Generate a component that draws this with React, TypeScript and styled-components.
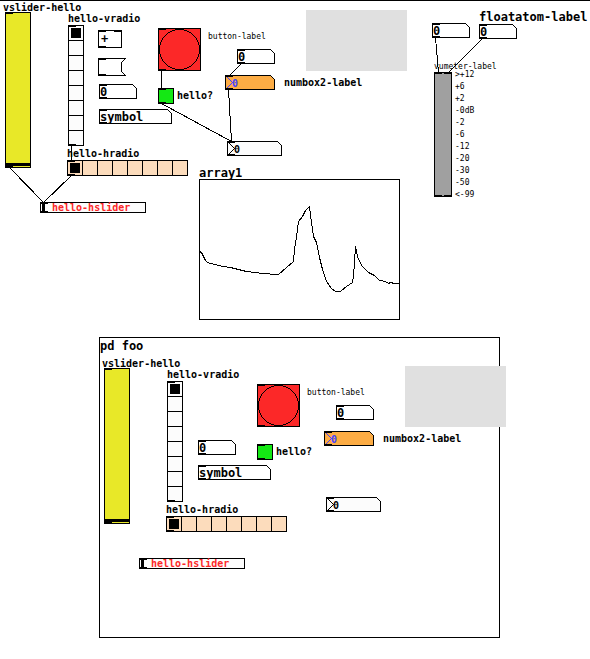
import { useId, type ReactNode } from 'react';
import styled, { createGlobalStyle, css } from 'styled-components';

const GlobalStyle = createGlobalStyle`
  *, *::before, *::after { box-sizing: border-box; }
  body {
    margin: 0;
    background: #fff;
    color: #000;
    font-family: "DejaVu Sans Mono", "Liberation Mono", monospace;
  }
`;

type Size = 'small' | 'medium' | 'large';

const textSize = {
  small: css`font-size: 8px; line-height: 8px; font-weight: 400;`,
  medium: css`font-size: 10px; line-height: 8px; font-weight: 700;`,
  large: css`font-size: 12px; line-height: 12px; font-weight: 700;`,
};

const Canvas = styled.main`
  position: relative;
  min-height: 100vh;
  overflow: auto;
  box-shadow: inset 0 1px #000;
`;

const Wires = styled.svg`
  position: absolute;
  inset: 0;
  width: 100%;
  height: 100%;
  fill: none;
  stroke: #000;
  shape-rendering: crispEdges;
  pointer-events: none;
`;

/* A patch object at its place on the free canvas; its label sits above or beside it. */
const Node = styled.div<{ $x: number; $y: number; $row?: boolean; $align?: string; $gap?: number }>`
  position: absolute;
  left: ${(p) => p.$x}px;
  top: ${(p) => p.$y}px;
  display: flex;
  flex-direction: ${(p) => (p.$row ? 'row' : 'column')};
  align-items: ${(p) => p.$align ?? 'flex-start'};
  gap: ${(p) => p.$gap ?? 0}px;
`;

const captionStyle = css<{ $size?: Size }>`
  margin: 0;
  white-space: pre;
  ${(p) => textSize[p.$size ?? 'medium']}
`;

const Label = styled.label<{ $size?: Size }>`${captionStyle}`;
const Caption = styled.span<{ $size?: Size }>`${captionStyle}`;
const Title = styled.h2<{ $size?: Size }>`${captionStyle}`;

const BangLabel = styled(Label)`
  padding-top: 5px;
`;

const SliderLabel = styled(Label)`
  position: absolute;
  inset: 0 0 0 12px;
  display: flex;
  align-items: center;
  color: #fc2828;
`;

const Body = styled.div`
  position: relative;
  display: flex;
`;

const Port = styled.span<{ $out?: boolean; $right?: boolean }>`
  position: absolute;
  ${(p) => (p.$out ? 'bottom: 0;' : 'top: 0;')}
  ${(p) => (p.$right ? 'right: 0;' : 'left: 0;')}
  width: 8px;
  height: 2px;
  background: #000;
  pointer-events: none;
`;

function Ported({ children, twin, twinOut }: { children: ReactNode; twin?: boolean; twinOut?: boolean }) {
  return (
    <Body>
      {children}
      <Port />
      <Port $out />
      {twin && <Port $right />}
      {twinOut && <Port $out $right />}
    </Body>
  );
}

const VSliderInput = styled.input`
  appearance: none;
  writing-mode: vertical-lr;
  direction: rtl;
  width: 26px;
  height: 156px;
  margin: 0;
  padding: 1px 0;
  border: 1px solid #000;
  background: #e8e828;
  &::-webkit-slider-thumb {
    appearance: none;
    width: 24px;
    height: 3px;
    background: #000;
  }
`;

const HSliderInput = styled.input`
  appearance: none;
  width: 106px;
  height: 11px;
  margin: 0;
  padding: 0 1px;
  border: 1px solid #000;
  background: #fcfcfc;
  &::-webkit-slider-thumb {
    appearance: none;
    width: 3px;
    height: 9px;
    background: #000;
  }
`;

const RadioGroup = styled.div<{ $vertical?: boolean }>`
  display: flex;
  flex-direction: ${(p) => (p.$vertical ? 'column' : 'row')};
  border: 1px solid #000;
  background: ${(p) => (p.$vertical ? '#fcfcfc' : '#fcdcbc')};
`;

const RadioCell = styled.input<{ $vertical?: boolean }>`
  appearance: none;
  box-sizing: content-box;
  width: 14px;
  height: 14px;
  margin: 0;
  border: 0 solid #000;
  ${(p) => (p.$vertical ? 'border-bottom-width: 1px;' : 'border-right-width: 1px;')}
  &:last-of-type { border-width: 0; }
  &:checked {
    background: linear-gradient(#000, #000) center / 10px 10px no-repeat;
  }
`;

const BangButton = styled.button`
  display: block;
  width: 43px;
  height: 43px;
  padding: 0;
  border: 1px solid #000;
  background: #fc2828;
  svg { display: block; }
`;

const ToggleInput = styled.input`
  appearance: none;
  width: 16px;
  height: 16px;
  margin: 0;
  border: 1px solid #000;
  background: #14e814;
`;

const Outline = styled.svg`
  display: block;
  overflow: visible;
  shape-rendering: crispEdges;
  stroke: #000;
`;

const AtomInput = styled.input<{ $indent: number; $color: string; $size: Size }>`
  position: absolute;
  inset: 0;
  width: 100%;
  height: 100%;
  padding: 1px 4px 0 ${(p) => p.$indent}px;
  border: 0;
  outline: 0;
  background: transparent;
  font-family: inherit;
  ${(p) => textSize[p.$size]}
  color: ${(p) => p.$color};
`;

const ObjectBox = styled.div`
  display: flex;
  align-items: center;
  width: 24px;
  height: 18px;
  padding-left: 2px;
  border: 1px solid #000;
  ${textSize.large}
`;

const GreyPanel = styled.div`
  width: 101px;
  height: 61px;
  background: #e0e0e0;
`;

const MeterRow = styled.div`
  display: flex;
  align-items: center;
  gap: 3px;
  height: 125px;
`;

const Meter = styled.div`
  width: 18px;
  height: 125px;
  border: 1px solid #000;
  background: #a0a0a0;
`;

const Scale = styled.ul`
  display: grid;
  gap: 4px;
  margin: 0;
  padding: 0;
  list-style: none;
  ${textSize.small}
`;

const ArrayFigure = styled.svg`
  display: block;
  width: 201px;
  height: 141px;
  border: 1px solid #000;
  fill: none;
  stroke: #000;
  shape-rendering: crispEdges;
`;

const Subpatch = styled.section`
  position: relative;
  width: 401px;
  height: 301px;
  padding-top: 2px;
  border: 1px solid #000;
`;

const SubpatchBody = styled.div`
  position: absolute;
  left: -1px;
  top: 18px;
`;

type AtomProps = {
  width: number;
  value: string;
  name?: string;
  id?: string;
  arrow?: boolean;
  fill?: string;
  color?: string;
};

function Atom({ width, value, name, id, arrow, fill = '#fff', color = '#000' }: AtomProps) {
  return (
    <Ported>
      <Outline width={width} height={15} fill={fill} aria-hidden="true">
        <path d={`M.5 .5H${width - 4.5}L${width - 0.5} 4.5V14.5H.5Z`} />
        {arrow && <path d="M1.5 1.5L7.5 7.5L1.5 13.5" fill="none" stroke={color} />}
      </Outline>
      <AtomInput
        id={id}
        aria-label={id ? undefined : name}
        defaultValue={value}
        $indent={arrow ? 7 : 1}
        $color={color}
        $size={arrow ? 'medium' : 'large'}
      />
    </Ported>
  );
}

function RadioStrip({ label, vertical }: { label: string; vertical?: boolean }) {
  const id = useId();
  return (
    <>
      <Caption id={id}>{label}</Caption>
      <Ported>
        <RadioGroup role="radiogroup" aria-labelledby={id} $vertical={vertical}>
          {Array.from({ length: 8 }, (_, i) => (
            <RadioCell
              key={i}
              type="radio"
              name={`${id}cell`}
              aria-label={String(i)}
              defaultChecked={i === 0}
              $vertical={vertical}
            />
          ))}
        </RadioGroup>
      </Ported>
    </>
  );
}

function Controls() {
  const id = useId();
  return (
    <>
      <Node $x={306} $y={10}>
        <GreyPanel />
      </Node>

      <Node $x={3} $y={4}>
        <Label htmlFor={`${id}vs`}>vslider-hello</Label>
        <VSliderHolder>
          <Ported>
            <VSliderInput id={`${id}vs`} type="range" min={0} max={127} defaultValue={0} />
          </Ported>
        </VSliderHolder>
      </Node>

      <Node $x={68} $y={15} $gap={2}>
        <RadioStrip label="hello-vradio" vertical />
      </Node>

      <Node $x={67} $y={150} $gap={2}>
        <RadioStrip label="hello-hradio" />
      </Node>

      <Node $x={40} $y={202}>
        <Ported>
          <HSliderInput id={`${id}hs`} type="range" min={0} max={127} defaultValue={0} />
          <SliderLabel htmlFor={`${id}hs`}>hello-hslider</SliderLabel>
        </Ported>
      </Node>

      <Node $x={99} $y={84}>
        <Atom width={38} value="0" name="number" />
      </Node>
      <Node $x={99} $y={109}>
        <Atom width={73} value="symbol" name="symbol" />
      </Node>

      <Node $x={158} $y={28} $row $gap={7}>
        <Ported>
          <BangButton id={`${id}b`}>
            <svg width="41" height="41" viewBox="0 0 41 41" fill="none" stroke="#000" shapeRendering="crispEdges" aria-hidden="true">
              <circle cx="20.5" cy="20.5" r="20" />
            </svg>
          </BangButton>
        </Ported>
        <BangLabel htmlFor={`${id}b`} $size="small">button-label</BangLabel>
      </Node>

      <Node $x={158} $y={88} $row $align="center" $gap={3}>
        <Ported>
          <ToggleInput id={`${id}t`} type="checkbox" />
        </Ported>
        <Label htmlFor={`${id}t`}>hello?</Label>
      </Node>

      <Node $x={237} $y={49}>
        <Atom width={38} value="0" name="number" />
      </Node>
      <Node $x={225} $y={75} $row $align="center" $gap={9}>
        <Atom width={50} value="0" id={`${id}n`} arrow fill="#fcac44" color="#4444fc" />
        <Label htmlFor={`${id}n`}>numbox2-label</Label>
      </Node>
      <Node $x={227} $y={141}>
        <Atom width={55} value="0" name="number box" arrow fill="#fcfcfc" />
      </Node>
    </>
  );
}

const VSliderHolder = styled.div`
  padding-left: 2px;
`;

const wires = [
  [9, 167, 43, 202],
  [71, 175, 43, 202],
  [71, 145, 71, 160],
  [161, 70, 161, 88],
  [161, 103, 231, 141],
  [241, 63, 229, 75],
  [228, 89, 231, 141],
  [435, 37, 438, 72],
  [482, 38, 448, 72],
];

const samples =
  '0,72 2,73 4,77 6,81 8,83 23,87 31,88 47,92 63,94 77,95 79,95 87,88 94,82 95,70 97,57 99,42 103,37 106,31 109,28 110,27 112,43 114,57 117,63 120,78 123,90 127,102 132,109 136,112 141,112 147,107 153,103 154,97 156,67 158,77 162,86 169,93 175,96 180,101 186,102 189,104 191,103 195,104 199,104';

const decibels = ['>+12', '+6', '+2', '-0dB', '-2', '-6', '-12', '-20', '-30', '-50', '<-99'];

export default function App() {
  return (
    <>
      <GlobalStyle />
      <Canvas>
        <Controls />

        <Node $x={98} $y={30}>
          <Ported twin>
            <ObjectBox>+</ObjectBox>
          </Ported>
        </Node>
        <Node $x={98} $y={58}>
          <Ported>
            <Outline width="28" height="18" fill="#fff" role="img" aria-label="Empty message">
              <path d="M.5 .5H27.5L23.5 4.5V13.5L27.5 17.5H.5Z" />
            </Outline>
          </Ported>
        </Node>

        <Node $x={199} $y={167}>
          <Title $size="large">array1</Title>
          <ArrayFigure role="img" aria-label="array1">
            <polyline points={samples} transform="translate(-.5 -.5)" />
          </ArrayFigure>
        </Node>

        <Node $x={432} $y={23}>
          <Atom width={38} value="0" name="number" />
        </Node>
        <Node $x={479} $y={11} $gap={1}>
          <Label htmlFor="floatatom" $size="large">floatatom-label</Label>
          <Atom width={38} value="0" id="floatatom" />
        </Node>

        <Node $x={434} $y={63} $gap={1}>
          <Caption id="vumeter" $size="small">vumeter-label</Caption>
          <MeterRow>
            <Ported twin twinOut>
              <Meter role="meter" aria-labelledby="vumeter" aria-valuemin={-99} aria-valuemax={12} aria-valuenow={-99} />
            </Ported>
            <Scale>
              {decibels.map((d) => <li key={d}>{d}</li>)}
            </Scale>
          </MeterRow>
        </Node>

        <Node $x={99} $y={337}>
          <Subpatch>
            <Title $size="large">pd foo</Title>
            <SubpatchBody>
              <Controls />
            </SubpatchBody>
          </Subpatch>
        </Node>

        <Wires aria-hidden="true">
          <g transform="translate(.5 .5)">
            {wires.map(([x1, y1, x2, y2]) => (
              <line key={`${x1}-${y1}`} x1={x1} y1={y1} x2={x2} y2={y2} />
            ))}
          </g>
        </Wires>
      </Canvas>
    </>
  );
}
